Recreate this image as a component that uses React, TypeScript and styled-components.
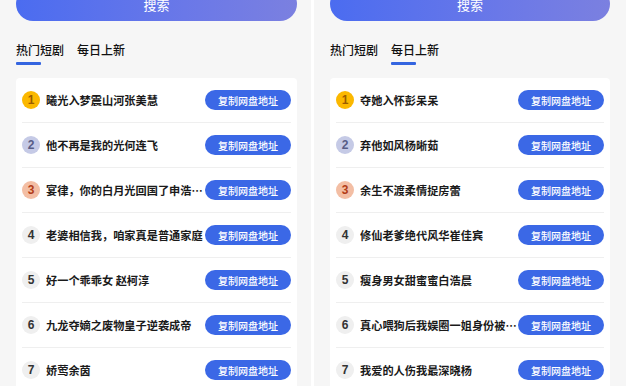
import { FunctionComponent } from 'react';
import styled, { createGlobalStyle } from 'styled-components';

const GlobalStyle = createGlobalStyle`
  html, body {
    margin: 0;
    padding: 0;
    background: #ffffff;
    font-family: 'Noto Sans CJK SC', 'Noto Sans', sans-serif;
  }
  * {
    box-sizing: border-box;
  }
`;

interface IScreen {
  active: number;
  titles: string[];
}

const screens: IScreen[] = [
  {
    active: 0,
    titles: [
      '曦光入梦震山河张美慧',
      '他不再是我的光何连飞',
      '宴律，你的白月光回国了申浩然儿',
      '老婆相信我，咱家真是普通家庭',
      '好一个乖乖女 赵柯淳',
      '九龙夺嫡之废物皇子逆袭成帝',
      '娇莺余茵',
    ],
  },
  {
    active: 1,
    titles: [
      '夺她入怀彭呆呆',
      '弃他如风杨晰茹',
      '余生不渡柔情捉房蕾',
      '修仙老爹绝代风华崔佳宾',
      '瘦身男女甜蜜蜜白浩晨',
      '真心喂狗后我娱圈一姐身份被曝光',
      '我爱的人伤我最深晓杨',
    ],
  },
];

const tabs = ['热门短剧', '每日上新'];

const rankColors = [
  { bg: '#fbb800', fg: '#9a5c00' },
  { bg: '#c5cae6', fg: '#585d86' },
  { bg: '#f3bea4', fg: '#b23c17' },
];

const Screen: FunctionComponent<{ screen: IScreen; first?: boolean }> = ({
  screen,
  first,
}) => {
  return (
    <ScreenContainer $first={first}>
      <SearchButton>搜索</SearchButton>
      <TabBar>
        {tabs.map((t, i) => (
          <Tab key={t} $active={i === screen.active}>
            {t}
          </Tab>
        ))}
      </TabBar>
      <ListCard>
        {screen.titles.map((title, i) => {
          const c = rankColors[i] || { bg: '#efefef', fg: '#333333' };
          return (
            <Row key={title}>
              <Rank $bg={c.bg} $fg={c.fg}>
                {i + 1}
              </Rank>
              <Title>{title}</Title>
              <CopyButton>复制网盘地址</CopyButton>
            </Row>
          );
        })}
      </ListCard>
    </ScreenContainer>
  );
};

const App = () => {
  return (
    <>
      <GlobalStyle />
      <Page>
        {screens.map((s, i) => (
          <Screen key={i} screen={s} first={i === 0} />
        ))}
      </Page>
    </>
  );
};

export default App;

const Page = styled.div`
  display: grid;
  grid-template-columns: 311px 315px;
  width: 626px;
  height: 386px;
  overflow: hidden;
`;

const ScreenContainer = styled.div<{ $first?: boolean }>`
  background: #f6f6f6;
  padding: ${(p) => (p.$first ? '0 14px 0 16px' : '0 16px 0 16px')};
  border-left: ${(p) => (p.$first ? 'none' : '3px solid #ffffff')};
  overflow: hidden;
`;

const SearchButton = styled.div`
  margin-top: -13px;
  height: 34px;
  border-radius: 17px;
  background: linear-gradient(90deg, #4b6cf0 0%, #6a78e8 60%, #7b80e0 100%);
  color: #ffffff;
  font-size: 13px;
  display: flex;
  align-items: center;
  justify-content: center;
`;

const TabBar = styled.div`
  display: flex;
  gap: 13px;
  margin-top: 20px;
`;

const Tab = styled.div<{ $active: boolean }>`
  font-size: 12px;
  font-weight: 500;
  line-height: 18px;
  color: #111111;
  padding-bottom: 6px;
  position: relative;
  &::after {
    content: '';
    position: absolute;
    left: 0;
    bottom: 0;
    width: 25px;
    height: 3px;
    border-radius: 1px;
    background: ${(p) => (p.$active ? '#3465e0' : 'transparent')};
  }
`;

const ListCard = styled.div`
  margin-top: 13px;
  background: #ffffff;
  border-radius: 4px;
  padding: 0 6px;
`;

const Row = styled.div`
  display: flex;
  align-items: center;
  height: 45px;
  border-bottom: 1px solid #efefef;
`;

const Rank = styled.div<{ $bg: string; $fg: string }>`
  flex: none;
  width: 18px;
  height: 18px;
  border-radius: 50%;
  background: ${(p) => p.$bg};
  color: ${(p) => p.$fg};
  font-family: 'Liberation Sans', 'Noto Sans', sans-serif;
  font-size: 12px;
  font-weight: 700;
  display: flex;
  align-items: center;
  justify-content: center;
`;

const Title = styled.div`
  flex: 1;
  min-width: 0;
  margin-left: 6px;
  font-size: 11.2px;
  font-weight: 600;
  color: #1a1a1a;
  white-space: nowrap;
  overflow: hidden;
  text-overflow: ellipsis;
`;

const CopyButton = styled.div`
  flex: none;
  width: 86px;
  height: 20px;
  margin-left: 1px;
  border-radius: 10px;
  background: #3b68e6;
  color: #ffffff;
  font-size: 10px;
  font-weight: 500;
  display: flex;
  align-items: center;
  justify-content: center;
`;
